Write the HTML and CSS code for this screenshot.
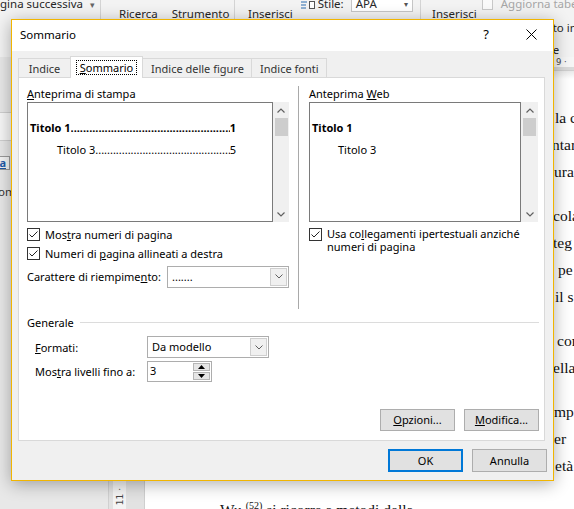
FILE: index.html
```html
<!DOCTYPE html>
<html lang="it">
<head>
<meta charset="utf-8">
<title>Sommario</title>
<link rel="stylesheet" href="styles.css">
</head>
<body>
<div class="word">
  <div class="ribbon">
    <div class="rg rg1">
      <div class="rtop">gina successiva <span class="rarrow">▾</span></div>
    </div>
    <div class="rsep"></div>
    <div class="rg rg2">
      <div class="rbot">Ricerca</div>
      <div class="rbot">Strumento</div>
    </div>
    <div class="rsep"></div>
    <div class="rg rg3">
      <div class="rbot">Inserisci</div>
      <div class="stile">
        <svg class="stile-ico" width="16" height="12" viewBox="0 0 16 12"><path d="M1 1h6M1 4h6M1 7h5M1 10h5" stroke="#2b6cb0" stroke-width="1"/><rect x="9.5" y="3.5" width="5" height="7" fill="#fff" stroke="#555"/></svg>
        <span class="rtop2">Stile:</span>
        <span class="apa">APA<span class="apa-arrow">▾</span></span>
      </div>
    </div>
    <div class="rsep"></div>
    <div class="rg rg4">
      <div class="rbot">Inserisci</div>
      <div class="rcol">
        <div class="rtop3"><span class="rchk"></span>Aggiorna tabella</div>
        <div class="rline2">to in</div>
        <div class="rline3">e</div>
      </div>
    </div>
  </div>
  <div class="main">
    <div class="leftpane">
      <div class="lp-field"></div>
      <div class="lp-ico">a</div>
      <div class="lp-text">om</div>
    </div>
    <div class="vruler"><span class="vr-strip"><span class="vr-num">11 ·</span></span></div>
    <div class="doc">
      <div class="hruler"><span class="hr-num">9 ·</span></div>
      <div class="page">
        <div class="para">
          <div class="ln" style="padding-left:410px">la c</div>
          <div class="ln" style="padding-left:407px">ntar</div>
          <div class="ln" style="padding-left:409px">ura</div>
        </div>
        <div class="para">
          <div class="ln" style="padding-left:408px">cola</div>
          <div class="ln" style="padding-left:408px">teg</div>
          <div class="ln" style="padding-left:413px">pe</div>
          <div class="ln" style="padding-left:410px">il s</div>
        </div>
        <div class="para">
          <div class="ln" style="padding-left:412px">con</div>
          <div class="ln" style="padding-left:408px">ella</div>
        </div>
        <div class="para">
          <div class="ln" style="padding-left:409px">mp</div>
          <div class="ln" style="padding-left:409px">er</div>
          <div class="ln" style="padding-left:410px">età</div>
        </div>
        <div class="para last">
          <div class="ln" style="padding-left:75px">Wu <sup>(52)</sup> si ricorre a metodi della</div>
        </div>
      </div>
    </div>
  </div>
</div>

<div class="dialog">
  <div class="titlebar">
    <span class="title">Sommario</span>
    <span class="tb-help">?</span>
    <span class="tb-close"><svg width="11" height="11" viewBox="0 0 11 11"><path d="M0.5 0.5L10.5 10.5M10.5 0.5L0.5 10.5" stroke="#000" stroke-width="1"/></svg></span>
  </div>
  <div class="dlg-body">
    <div class="tabs">
      <div class="tab t1">Indice</div>
      <div class="tab sel"><span class="focus"><u>S</u>ommario</span></div>
      <div class="tab t3">Indice delle figure</div>
      <div class="tab t4">Indice fonti</div>
    </div>
    <div class="panel">
      <div class="previews">
        <div class="col col-left">
          <div class="lbl"><u>A</u>nteprima di stampa</div>
          <div class="preview">
            <div class="pbox pbox-left">
              <div class="toc lv1"><span>Titolo 1</span><span class="dots">....................................................................................</span><span>1</span></div>
              <div class="toc lv3"><span>Titolo 3</span><span class="dots">....................................................................................</span><span>5</span></div>
            </div>
            <div class="sbar">
              <div class="sb-arrow"><svg width="8" height="5" viewBox="0 0 8 5"><path d="M0.5 4.5L4 1L7.5 4.5" fill="none" stroke="#606060" stroke-width="1.2"/></svg></div>
              <div class="sb-thumb"></div>
              <div class="sb-fill"></div>
              <div class="sb-arrow"><svg width="8" height="5" viewBox="0 0 8 5"><path d="M0.5 0.5L4 4L7.5 0.5" fill="none" stroke="#606060" stroke-width="1.2"/></svg></div>
            </div>
          </div>
          <div class="chk">
            <span class="box"><svg width="11" height="11" viewBox="0 0 11 11"><path d="M1.5 5.5L4 8L9.5 2.5" fill="none" stroke="#222" stroke-width="1"/></svg></span>
            <span>Mos<u>t</u>ra numeri di pagina</span>
          </div>
          <div class="chk">
            <span class="box"><svg width="11" height="11" viewBox="0 0 11 11"><path d="M1.5 5.5L4 8L9.5 2.5" fill="none" stroke="#222" stroke-width="1"/></svg></span>
            <span>Numeri di <u>p</u>agina allineati a destra</span>
          </div>
          <div class="fillrow">
            <span class="fill-lbl">Carattere di riempime<u>n</u>to:</span>
            <div class="combo combo-fill">
              <span class="combo-val">.......</span>
              <span class="combo-btn"><svg width="8" height="5" viewBox="0 0 8 5"><path d="M0.5 0.5L4 4L7.5 0.5" fill="none" stroke="#606060" stroke-width="1"/></svg></span>
            </div>
          </div>
        </div>
        <div class="vsep"></div>
        <div class="col col-right">
          <div class="lbl">Anteprima <u>W</u>eb</div>
          <div class="preview">
            <div class="pbox pbox-right">
              <div class="toc lv1"><span>Titolo 1</span></div>
              <div class="toc lv3w"><span>Titolo 3</span></div>
            </div>
            <div class="sbar sbar-r">
              <div class="sb-arrow"><svg width="8" height="5" viewBox="0 0 8 5"><path d="M0.5 4.5L4 1L7.5 4.5" fill="none" stroke="#606060" stroke-width="1.2"/></svg></div>
              <div class="sb-thumb"></div>
              <div class="sb-fill"></div>
              <div class="sb-arrow"><svg width="8" height="5" viewBox="0 0 8 5"><path d="M0.5 0.5L4 4L7.5 0.5" fill="none" stroke="#606060" stroke-width="1.2"/></svg></div>
            </div>
          </div>
          <div class="chk chk-wrap">
            <span class="box"><svg width="11" height="11" viewBox="0 0 11 11"><path d="M1.5 5.5L4 8L9.5 2.5" fill="none" stroke="#222" stroke-width="1"/></svg></span>
            <span class="wrap-text">Usa co<u>l</u>legamenti ipertestuali anziché<br>numeri di pagina</span>
          </div>
        </div>
      </div>
      <div class="generale"><span>Generale</span><span class="gline"></span></div>
      <div class="frow frow1">
        <span class="flbl"><u>F</u>ormati:</span>
        <div class="combo combo-fmt">
          <span class="combo-val">Da modello</span>
          <span class="combo-btn"><svg width="8" height="5" viewBox="0 0 8 5"><path d="M0.5 0.5L4 4L7.5 0.5" fill="none" stroke="#606060" stroke-width="1"/></svg></span>
        </div>
      </div>
      <div class="frow frow2">
        <span class="flbl">Mos<u>t</u>ra livelli fino a:</span>
        <div class="spin">
          <span class="spin-val">3</span>
          <span class="spin-btns">
            <span class="spin-b"><svg width="7" height="4" viewBox="0 0 7 4"><path d="M0 4L3.5 0L7 4Z" fill="#000"/></svg></span>
            <span class="spin-b"><svg width="7" height="4" viewBox="0 0 7 4"><path d="M0 0L3.5 4L7 0Z" fill="#000"/></svg></span>
          </span>
        </div>
      </div>
      <div class="pbtns">
        <button class="btn"><u>O</u>pzioni...</button>
        <button class="btn"><u>M</u>odifica...</button>
      </div>
    </div>
    <div class="dbtns">
      <button class="btn btn-ok">OK</button>
      <button class="btn">Annulla</button>
    </div>
  </div>
</div>
</body>
</html>
```
FILE: styles.css
```css
* { box-sizing: border-box; }
html, body { margin: 0; padding: 0; }
body {
  width: 574px;
  height: 509px;
  overflow: hidden;
  position: relative;
  background: #e6e6e6;
  font-family: "Noto Sans", sans-serif;
  font-size: 11px;
  color: #000;
}
u { text-decoration: underline; text-underline-offset: 1px; }

/* ---------- background Word window ---------- */
.word { display: flex; flex-direction: column; width: 574px; height: 509px; }
.ribbon {
  height: 57px;
  background: #f3f3f3;
  display: flex;
  color: #262626;
  white-space: nowrap;
  overflow: hidden;
  flex-shrink: 0;
}
.rsep { width: 1px; background: #d4d4d4; height: 22px; flex-shrink: 0; }
.rg { position: relative; display: flex; flex-shrink: 0; }
.rg1 { width: 100px; }
.rtop { margin-top: -4px; line-height: 15px; font-size: 11.5px; }
.rarrow { margin-left: 4px; color: #666; font-size: 9px; }
.rg2 { width: 133px; padding-left: 18px; gap: 14px; }
.rbot { margin-top: 6px; line-height: 16px; font-size: 11.5px; }
.rg3 { width: 185px; padding-left: 13px; }
.stile { display: flex; align-items: flex-start; margin-left: 7px; margin-top: -4px; }
.stile-ico { margin-top: 2px; margin-right: 2px; }
.rtop2 { line-height: 15px; font-size: 11.5px; }
.apa {
  margin-left: 7px;
  width: 62px;
  height: 17px;
  border: 1px solid #c6c6c6;
  background: #fff;
  padding-left: 4px;
  line-height: 15px;
  color: #2a2a2a;
  position: relative;
  font-size: 11.5px;
  margin-top: -1px;
}
.apa-arrow { position: absolute; right: 4px; top: 0; font-size: 8px; color: #555; }
.rg4 { flex: 1 1 auto; min-width: 0; overflow: hidden; padding-left: 11px; }
.rcol { margin-left: 5px; display: flex; flex-direction: column; }
.rtop3 { margin-top: -4px; line-height: 15px; color: #a6a6a6; display: flex; align-items: center; font-size: 11.5px; }
.rchk { width: 11px; height: 12px; border: 1px solid #c8c8c8; background: #fafafa; margin-right: 8px; }
.rline2 { padding-left: 71px; line-height: 15px; margin-top: 9px; font-size: 11.5px; }
.rline3 { padding-left: 71px; line-height: 15px; margin-top: 7px; font-size: 11.5px; }

.main { flex: 1; display: flex; min-height: 0; }
.leftpane { width: 108px; background: #e8e8e8; display: flex; flex-direction: column; flex-shrink: 0; }
.lp-field { height: 29px; margin-top: 55px; background: #f7f7f7; border-top: 1px solid #cfcfcf; border-bottom: 1px solid #cfcfcf; }
.lp-ico {
  margin-top: 15px; width: 24px; height: 14px; margin-left: -14px;
  border: 1px solid #9a9a9a; background: #f4f4f4;
  color: #1e5aa8; font-weight: bold; text-decoration: underline;
  text-align: right; padding-right: 3px; line-height: 12px; font-size: 11px;
}
.lp-text { margin-top: 15px; line-height: 14px; margin-left: -2px; color: #333; font-size: 11.5px; }
.vruler { width: 37px; flex-shrink: 0; background: #e2e2e2; border-left: 1px solid #d0d0d0; border-right: 1px solid #cfcfcf; display: flex; padding-left: 4px; }
.vr-strip { width: 13px; background: #f4f4f4; display: flex; justify-content: center; align-items: flex-end; padding-bottom: 4px; }
.vr-num { writing-mode: vertical-rl; transform: rotate(180deg); font-size: 9px; color: #444; font-family: "DejaVu Sans", sans-serif; }
.doc { flex: 1; display: flex; flex-direction: column; min-width: 0; }
.hruler { height: 14px; background: #dadada; border-bottom: 1px solid #cfcfcf; flex-shrink: 0; }
.hr-num { display: block; height: 10px; background: #f6f6f6; padding-left: 411px; font-size: 8.5px; line-height: 10px; color: #444; font-family: "DejaVu Sans", sans-serif; }
.page {
  flex: 1;
  background: linear-gradient(#e9e9e9, #ffffff 8px);
  padding-top: 33px;
  font-family: "Liberation Serif", serif;
  font-size: 15.5px;
  color: #111;
  white-space: nowrap;
  overflow: hidden;
}
.para { margin-bottom: 17px; }
.para.last { margin-top: 7px; }
.ln { line-height: 27px; height: 27px; }
.ln sup { font-size: 10px; vertical-align: 6px; line-height: 0; }

/* ---------- dialog ---------- */
.dialog {
  position: absolute;
  left: 11px;
  top: 19px;
  width: 543px;
  height: 462px;
  border: 1px solid #f1b500;
  background: #f0f0f0;
  box-shadow: 0 3px 16px rgba(0, 0, 0, 0.32);
  display: flex;
  flex-direction: column;
}
.titlebar {
  height: 31px;
  background: #fff;
  display: flex;
  align-items: center;
  padding-left: 8px;
  padding-bottom: 3px;
  font-size: 11.5px;
  flex-shrink: 0;
}
.title { flex: 1; }
.tb-help { width: 10px; margin-right: 35px; font-size: 13px; text-align: center; }
.tb-close { width: 11px; height: 11px; margin-right: 16px; display: flex; }
.dlg-body { flex: 1; display: flex; flex-direction: column; padding: 7px 8px 0 6px; }

.tabs { display: flex; height: 19px; position: relative; z-index: 2; }
.tab {
  height: 19px;
  border: 1px solid #d9d9d9;
  border-bottom: none;
  background: #f0f0f0;
  text-align: center;
  line-height: 15px;
  padding-top: 2px;
  color: #333;
  white-space: nowrap;
}
.t1 { width: 53px; }
.sel {
  width: 73px;
  margin-left: -1px;
  height: 22px;
  margin-top: -2px;
  background: #fff;
  color: #000;
  padding-top: 3px;
}
.focus { display: inline-block; border: 1px dotted #000; padding: 0 3px; line-height: 13px; }
.t3 { width: 110px; margin-left: -1px; text-align: left; padding-left: 8px; }
.t4 { width: 76px; margin-left: -1px; text-align: left; padding-left: 8px; }

.panel {
  height: 364px;
  background: #fff;
  border: 1px solid #d9d9d9;
  display: flex;
  flex-direction: column;
  flex-shrink: 0;
}
.previews { display: flex; padding: 8px 5px 0 8px; }
.col { display: flex; flex-direction: column; }
.col-left { width: 262px; }
.col-right { width: 229px; }
.vsep { width: 1px; height: 223px; background: #a9a9a9; margin: 0 10px 0 9px; }
.lbl { line-height: 15px; height: 15px; }
.preview { display: flex; height: 120px; margin-top: 1px; }
.pbox { border: 1px solid #7a7a7a; background: #fff; padding: 14px 0 0 2px; }
.pbox-left { width: 246px; padding-right: 36px; }
.pbox-right { width: 212px; }
.toc { display: flex; line-height: 22px; height: 22px; white-space: nowrap; }
.toc.lv1 { font-weight: bold; }
.toc.lv3 { padding-left: 27px; }
.toc.lv3w { padding-left: 26px; }
.dots { flex: 1; overflow: hidden; min-width: 0; }
.sbar { width: 16px; background: #f0f0f0; display: flex; flex-direction: column; align-items: center; }
.sbar-r { width: 17px; }
.sb-arrow { height: 16px; display: flex; align-items: center; justify-content: center; }
.sb-thumb { width: 13px; height: 18px; background: #cdcdcd; }
.sb-fill { flex: 1; }

.chk { display: flex; align-items: center; height: 19px; white-space: nowrap; }
.preview + .chk { margin-top: 3px; }
.box {
  width: 13px; height: 13px;
  border: 1px solid #333;
  background: #fff;
  margin-right: 5px;
  display: flex;
  flex-shrink: 0;
}
.chk-wrap { align-items: flex-start; height: auto; }
.preview + .chk-wrap { margin-top: 6px; }
.wrap-text { line-height: 13px; margin-top: -1px; white-space: nowrap; }

.fillrow { display: flex; align-items: center; justify-content: space-between; margin-top: 2px; height: 23px; }
.combo {
  height: 22px;
  border: 1px solid #adadad;
  background: #fff;
  display: flex;
  align-items: stretch;
}
.combo-fill { width: 122px; }
.combo-fmt { width: 122px; }
.combo-val { flex: 1; padding-left: 4px; line-height: 19px; white-space: nowrap; }
.combo-btn {
  width: 17px;
  margin: 1px;
  background: #f0f0f0;
  border: 1px solid #cfcfcf;
  display: flex;
  align-items: center;
  justify-content: center;
}

.generale { display: flex; align-items: center; padding: 6px 5px 0 8px; line-height: 15px; }
.gline { flex: 1; height: 1px; background: #dcdcdc; margin-left: 6px; }
.frow { display: flex; align-items: center; padding-left: 16px; white-space: nowrap; }
.frow1 { margin-top: 6px; }
.frow2 { margin-top: 3px; }
.flbl { width: 112px; }
.spin {
  width: 65px; height: 21px;
  border: 1px solid #adadad;
  background: #fff;
  display: flex;
}
.spin-val { flex: 1; padding-left: 2px; line-height: 18px; }
.spin-btns { width: 18px; display: flex; flex-direction: column; padding: 1px 1px 1px 0; gap: 1px; }
.spin-b { flex: 1; background: #e6e6e6; border: 1px solid #b6b6b6; display: flex; align-items: center; justify-content: center; }

.pbtns { display: flex; justify-content: flex-end; gap: 9px; padding-right: 5px; margin-top: 27px; }
.btn {
  width: 75px;
  height: 22px;
  background: #e1e1e1;
  border: 1px solid #adadad;
  font-family: "Noto Sans", sans-serif;
  font-size: 11px;
  color: #000;
  padding: 0;
  line-height: 18px;
}
.dbtns { display: flex; justify-content: flex-end; gap: 9px; margin-top: 8px; margin-right: -2px; }
.dbtns .btn { height: 23px; }
.btn-ok { border: 2px solid #0078d7; }
```
